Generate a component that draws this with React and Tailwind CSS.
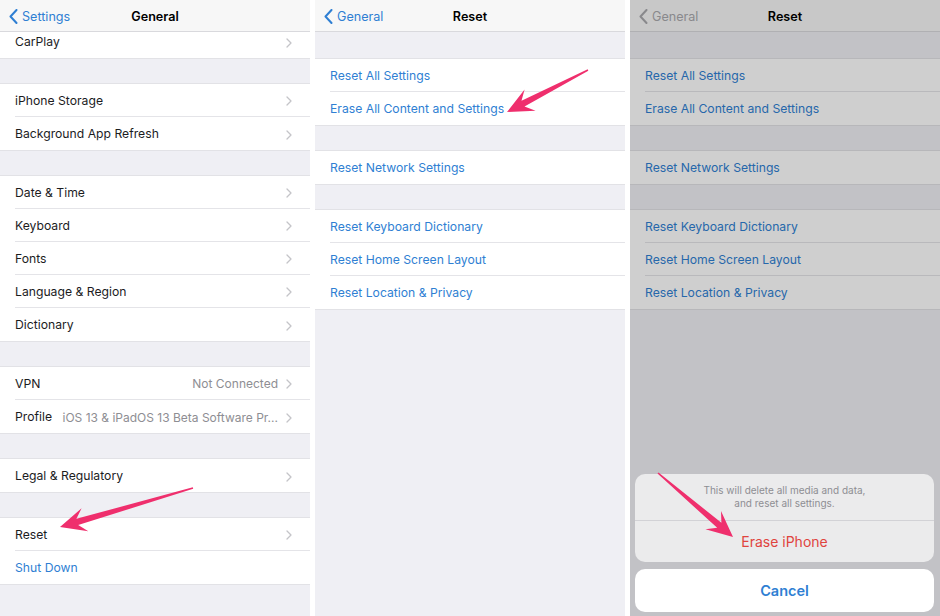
import React from 'react';

const PINK = '#ef2f6d';

function arrowPoints(x1, y1, x2, y2) {
  const dx = x2 - x1;
  const dy = y2 - y1;
  const len = Math.hypot(dx, dy);
  const ux = dx / len;
  const uy = dy / len;
  const nx = -uy;
  const ny = ux;
  const headLen = 26;
  const neck = 18;
  const headW = 24;
  const tailW = 1.5;
  const neckW = 6.5;
  const nX = x2 - ux * neck;
  const nY = y2 - uy * neck;
  const wX = x2 - ux * headLen;
  const wY = y2 - uy * headLen;
  const pts = [
    [x1 + (nx * tailW) / 2, y1 + (ny * tailW) / 2],
    [nX + (nx * neckW) / 2, nY + (ny * neckW) / 2],
    [wX + (nx * headW) / 2, wY + (ny * headW) / 2],
    [x2, y2],
    [wX - (nx * headW) / 2, wY - (ny * headW) / 2],
    [nX - (nx * neckW) / 2, nY - (ny * neckW) / 2],
    [x1 - (nx * tailW) / 2, y1 - (ny * tailW) / 2],
  ];
  return pts.map((p) => p[0].toFixed(1) + ',' + p[1].toFixed(1)).join(' ');
}

function Chevron() {
  return (
    <svg width="6" height="10" viewBox="0 0 6 10" className="shrink-0">
      <path d="M1 1l4 4-4 4" fill="none" stroke="#c4c4c8" strokeWidth="1.3" strokeLinecap="round" strokeLinejoin="round" />
    </svg>
  );
}

function Row({ label, value, chevron = true, blue = false, last = false }) {
  return (
    <div className="h-[33px] pl-[15px] bg-white">
      <div className={last ? 'h-full flex items-center pt-[2px] pr-[18px]' : 'h-full flex items-center pt-[2px] pr-[18px] border-b border-[#e4e4e8]'}>
        <span className={blue ? 'text-[12.2px] text-[#2f7fd3] whitespace-nowrap' : 'text-[12.2px] text-[#1c1c1e] whitespace-nowrap'}>{label}</span>
        {value && (
          <span className="ml-auto pl-[7px] min-w-0 whitespace-nowrap overflow-hidden text-[12px] text-[#8e8e93] mr-[8px]">{value}</span>
        )}
        {chevron && <span className={value ? '' : 'ml-auto'}><Chevron /></span>}
      </div>
    </div>
  );
}

function Group({ children }) {
  return <div className="border-y border-[#e2e2e6] bg-white">{children}</div>;
}

function Gap({ h = 'h-[26px]' }) {
  return <div className={h} />;
}

function NavBar({ back, title, dim = false }) {
  return (
    <div className="relative z-10 h-[32px] shrink-0 pt-[3px] bg-[#f7f7f7] border-b border-[#d9d9dd] grid grid-cols-3 items-center">
      <div className="flex items-center pl-[9px] gap-[4px]">
        <svg width="9" height="15" viewBox="0 0 9 15">
          <path d="M7.5 1L1.5 7.5l6 6.5" fill="none" stroke={dim ? '#a9a9ad' : '#2f7fd3'} strokeWidth="2" strokeLinecap="round" strokeLinejoin="round" />
        </svg>
        <span className={dim ? 'text-[12.6px] text-[#a9a9ad]' : 'text-[12.6px] text-[#2f7fd3]'}>{back}</span>
      </div>
      <div className="text-center text-[12.6px] font-semibold text-black">{title}</div>
      <div />
    </div>
  );
}

function GeneralPanel() {
  return (
    <div className="w-[310px] h-[616px] shrink-0 overflow-hidden flex flex-col bg-[#efeff4]">
      <NavBar back="Settings" title="General" />
      <div className="-mt-[8px]">
        <Group>
          <Row label="CarPlay" last />
        </Group>
        <Gap h="h-[24px]" />
        <Group>
          <Row label="iPhone Storage" />
          <Row label="Background App Refresh" last />
        </Group>
        <Gap h="h-[24px]" />
        <Group>
          <Row label="Date & Time" />
          <Row label="Keyboard" />
          <Row label="Fonts" />
          <Row label="Language & Region" />
          <Row label="Dictionary" last />
        </Group>
        <Gap h="h-[24px]" />
        <Group>
          <Row label="VPN" value="Not Connected" />
          <Row label="Profile" value="iOS 13 & iPadOS 13 Beta Software Pr..." last />
        </Group>
        <Gap h="h-[24px]" />
        <Group>
          <Row label="Legal & Regulatory" last />
        </Group>
        <Gap h="h-[24px]" />
        <Group>
          <Row label="Reset" />
          <Row label="Shut Down" blue chevron={false} last />
        </Group>
      </div>
    </div>
  );
}

function ResetList() {
  return (
    <div>
      <Gap h="h-[26px]" />
      <Group>
        <Row label="Reset All Settings" blue chevron={false} />
        <Row label="Erase All Content and Settings" blue chevron={false} last />
      </Group>
      <Gap h="h-[24px]" />
      <Group>
        <Row label="Reset Network Settings" blue chevron={false} last />
      </Group>
      <Gap h="h-[24px]" />
      <Group>
        <Row label="Reset Keyboard Dictionary" blue chevron={false} />
        <Row label="Reset Home Screen Layout" blue chevron={false} />
        <Row label="Reset Location & Privacy" blue chevron={false} last />
      </Group>
    </div>
  );
}

function ResetPanel() {
  return (
    <div className="w-[310px] h-[616px] shrink-0 overflow-hidden flex flex-col bg-[#efeff4]">
      <NavBar back="General" title="Reset" />
      <ResetList />
    </div>
  );
}

function ConfirmPanel() {
  return (
    <div className="relative w-[310px] h-[616px] shrink-0 overflow-hidden flex flex-col bg-[#efeff4]">
      <NavBar back="General" title="Reset" dim />
      <ResetList />
      <div className="absolute inset-0 z-20 bg-black/[0.19]" />
      <div className="absolute z-30 left-[5px] right-[6px] bottom-[4px] flex flex-col gap-[7px]">
        <div className="rounded-[10px] bg-[#ebebec] overflow-hidden">
          <div className="h-[47px] flex flex-col items-center justify-center border-b border-[#d2d2d6] text-[10px] leading-[13px] text-[#8e8e93]">
            <span>This will delete all media and data,</span>
            <span>and reset all settings.</span>
          </div>
          <div className="h-[41px] flex items-center justify-center text-[14px] text-[#e0443e]">Erase iPhone</div>
        </div>
        <div className="h-[43px] rounded-[10px] bg-white flex items-center justify-center text-[14.5px] font-semibold text-[#2f7fd3]">
          Cancel
        </div>
      </div>
    </div>
  );
}

export default function App() {
  return (
    <div className="relative w-[940px] h-[616px] overflow-hidden bg-white flex gap-[5px] font-['Inter',sans-serif] antialiased">
      <GeneralPanel />
      <ResetPanel />
      <ConfirmPanel />
      {/* annotation arrows */}
      <svg className="absolute inset-0 z-40 pointer-events-none" width="940" height="616" viewBox="0 0 940 616">
        <polygon points={arrowPoints(193, 488, 60, 527)} fill={PINK} />
        <polygon points={arrowPoints(588, 70, 507, 112)} fill={PINK} />
        <polygon points={arrowPoints(658, 473, 733, 537)} fill={PINK} />
      </svg>
    </div>
  );
}
